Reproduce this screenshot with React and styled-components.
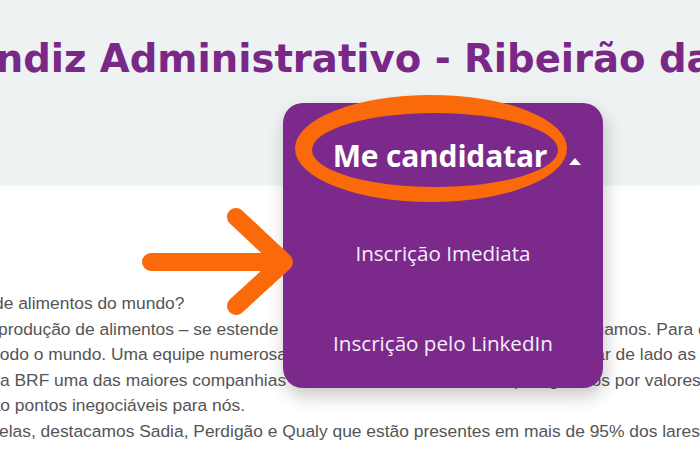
import React from 'react';
import styled, { createGlobalStyle } from 'styled-components';

const GlobalStyle = createGlobalStyle`
  html, body {
    margin: 0;
    padding: 0;
    background: #ffffff;
    overflow: hidden;
  }
`;

const Page = styled.div`
  position: relative;
  width: 700px;
  height: 467px;
  overflow: hidden;
  background: #ffffff;
`;

const Hero = styled.header`
  height: 185px;
  background: #eef2f3;
  padding-top: 36px;
  box-sizing: border-box;
  box-shadow: 0 1px 3px rgba(0, 0, 0, 0.04);
`;

const Title = styled.h1`
  margin: 0 0 0 -107px;
  font-family: "DejaVu Sans", Verdana, sans-serif;
  font-weight: bold;
  font-size: 38.6px;
  line-height: 46px;
  color: #7a2888;
  white-space: nowrap;
`;

const Content = styled.section`
  padding-top: 106px;
  font-family: "Liberation Sans", Arial, sans-serif;
  font-size: 17.4px;
  line-height: 25.6px;
  color: #555555;
`;

const Line = styled.div`
  white-space: nowrap;
  margin-left: ${p => p.$shift || 0}px;
`;

const Dropdown = styled.div`
  position: absolute;
  left: 283px;
  top: 103px;
  width: 320px;
  height: 285px;
  background: #7b2a8c;
  border-radius: 20px;
  box-shadow: 2px 8px 18px rgba(0, 0, 0, 0.22);
  display: flex;
  flex-direction: column;
  font-family: "Open Sans", "Noto Sans", sans-serif;
  color: #ffffff;
`;

const Toggle = styled.div`
  height: 105px;
  display: flex;
  align-items: center;
  justify-content: center;
  padding-right: 6px;
`;

const ToggleLabel = styled.span`
  position: relative;
  font-size: 30px;
  font-weight: 700;
  letter-spacing: -0.2px;

  &::after {
    content: '';
    position: absolute;
    left: calc(100% + 22px);
    bottom: 11px;
    border-left: 6px solid transparent;
    border-right: 6px solid transparent;
    border-bottom: 7px solid #ffffff;
  }
`;

const MenuItem = styled.a`
  height: 90px;
  display: flex;
  align-items: center;
  justify-content: center;
  font-size: 20.6px;
  color: #f6eef8;
  text-decoration: none;
`;

const Markup = styled.svg`
  position: absolute;
  inset: 0;
  width: 700px;
  height: 467px;
  pointer-events: none;
`;

export default function App() {
  return (
    <Page>
      <GlobalStyle />
      <Hero>
        <Title>Aprendiz Administrativo - Ribeirão das Neves</Title>
      </Hero>
      <Content>
        <Line $shift={-6}>de alimentos do mundo?</Line>
        <Line $shift={-2}>produção de alimentos – se estende a cada dia em tudo que fazemos e entregamos. Para entregar</Line>
        <Line $shift={-5}>todo o mundo. Uma equipe numerosa e muito diversa, que trabalha, sem deixar de lado as pessoas</Line>
        <Line $shift={0}>a BRF uma das maiores companhias de alimentos do mundo, sempre, guiados por valores que</Line>
        <Line $shift={-18}>são pontos inegociáveis para nós.</Line>
        <Line $shift={-1}>elas, destacamos Sadia, Perdigão e Qualy que estão presentes em mais de 95% dos lares brasileiros.</Line>
      </Content>

      <Dropdown>
        <Toggle>
          <ToggleLabel>Me candidatar</ToggleLabel>
        </Toggle>
        <MenuItem href="#">Inscrição Imediata</MenuItem>
        <MenuItem href="#">Inscrição pelo LinkedIn</MenuItem>
      </Dropdown>

      <Markup viewBox="0 0 700 467">
        <path
          fillRule="evenodd"
          fill="#fb6a0a"
          d="M295 148.5a136 53.5 0 1 0 272 0a136 53.5 0 1 0 -272 0Z M312 150a123 37 0 1 0 246 0a123 37 0 1 0 -246 0Z"
        />
        <path
          d="M151 262H283M236 217L284 262L236 306"
          fill="none"
          stroke="#fb6a0a"
          strokeWidth="18"
          strokeLinecap="round"
          strokeLinejoin="round"
        />
      </Markup>
    </Page>
  );
}
